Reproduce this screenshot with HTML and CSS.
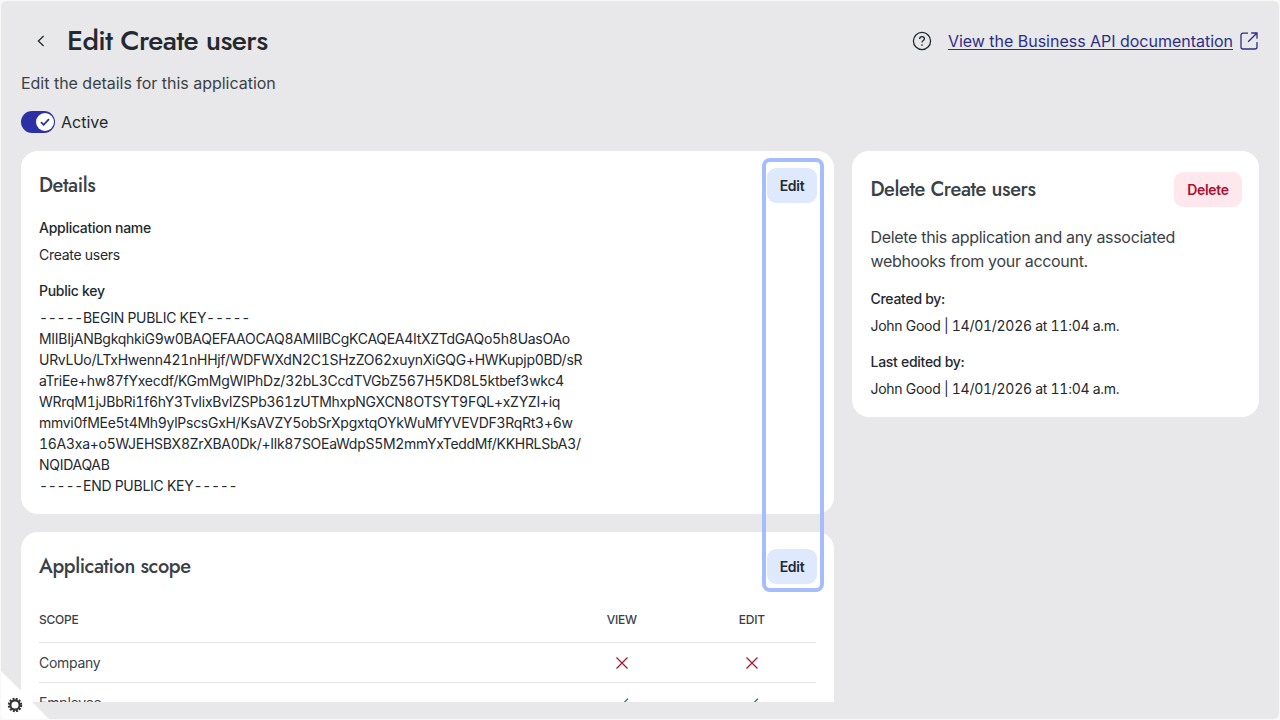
FILE: index.html
```html
<!DOCTYPE html>
<html lang="en">
<head>
  <meta charset="UTF-8" />
  <meta name="viewport" content="width=device-width, initial-scale=1.0" />
  <title>Edit Create users</title>
  <link rel="stylesheet" href="styles.css">
</head>
<body>
  <div class="page">
    <header class="header">
      <a class="back" href="#" aria-label="Back">
        <svg width="8" height="12" viewBox="0 0 8 12"><path d="M6.6 1L1.4 6l5.2 5"/></svg>
      </a>
      <h1>Edit Create users</h1>
      <div class="docs">
        <svg class="help" width="20" height="20" viewBox="0 0 20 20">
          <circle cx="10" cy="10" r="8.6"/>
          <path d="M7.6 8.1c0-1.5 1-2.5 2.4-2.5s2.4.9 2.4 2.2c0 1.7-2.4 1.8-2.4 3.7"/>
          <circle class="dot" cx="10" cy="14" r=".85"/>
        </svg>
        <a href="#">View the Business API documentation</a>
        <svg class="external" width="18" height="18" viewBox="0 0 18 18">
          <path d="M8 1.2H3a2 2 0 0 0-2 2V15a2 2 0 0 0 2 2h12a2 2 0 0 0 2-2v-5M11.200 1H17v5.800M17 1L8.200 9.800"/>
        </svg>
      </div>
    </header>

    <p class="subtitle">Edit the details for this application</p>

    <div class="status">
      <div class="toggle">
        <div class="knob"><svg width="10" height="8" viewBox="0 0 10 8"><path d="M1 4.200l2.600 2.600L9 1.200"/></svg></div>
      </div>
      <span>Active</span>
    </div>

    <main class="columns">
      <div class="left">
        <!-- DETAILS -->
        <section class="card">
          <div class="card-head">
            <h2>Details</h2>
            <button class="btn">Edit</button>
          </div>
          <dl>
            <dt>Application name</dt>
            <dd>Create users</dd>
            <dt>Public key</dt>
            <dd class="key">
              <div>-----BEGIN PUBLIC KEY-----</div>
              <div>MIIBIjANBgkqhkiG9w0BAQEFAAOCAQ8AMIIBCgKCAQEA4ItXZTdGAQo5h8UasOAo</div>
              <div>URvLUo/LTxHwenn421nHHjf/WDFWXdN2C1SHzZO62xuynXiGQG+HWKupjp0BD/sR</div>
              <div>aTriEe+hw87fYxecdf/KGmMgWIPhDz/32bL3CcdTVGbZ567H5KD8L5ktbef3wkc4</div>
              <div>WRrqM1jJBbRi1f6hY3TvIixBvIZSPb361zUTMhxpNGXCN8OTSYT9FQL+xZYZI+iq</div>
              <div>mmvi0fMEe5t4Mh9ylPscsGxH/KsAVZY5obSrXpgxtqOYkWuMfYVEVDF3RqRt3+6w</div>
              <div>16A3xa+o5WJEHSBX8ZrXBA0Dk/+Ilk87SOEaWdpS5M2mmYxTeddMf/KKHRLSbA3/</div>
              <div>NQIDAQAB</div>
              <div>-----END PUBLIC KEY-----</div>
            </dd>
          </dl>
        </section>

        <!-- SCOPE -->
        <section class="card">
          <div class="card-head">
            <h2>Application scope</h2>
            <button class="btn">Edit</button>
          </div>
          <table>
            <thead>
              <tr><th>SCOPE</th><th>VIEW</th><th>EDIT</th></tr>
            </thead>
            <tbody>
              <tr>
                <td>Company</td>
                <td><svg class="no" width="12" height="12" viewBox="0 0 12 12"><path d="M.5.5l11 11M11.500.5l-11 11"/></svg></td>
                <td><svg class="no" width="12" height="12" viewBox="0 0 12 12"><path d="M.5.5l11 11M11.500.5l-11 11"/></svg></td>
              </tr>
              <tr>
                <td>Employee</td>
                <td><svg class="yes" width="14" height="10" viewBox="0 0 14 10"><path d="M1 5.500L4.600 9 13 .7"/></svg></td>
                <td><svg class="yes" width="14" height="10" viewBox="0 0 14 10"><path d="M1 5.500L4.600 9 13 .7"/></svg></td>
              </tr>
            </tbody>
          </table>
        </section>
        <div class="highlight"></div>
      </div>

      <!-- DELETE -->
      <aside class="card side">
        <div class="card-head">
          <h2>Delete Create users</h2>
          <button class="btn danger">Delete</button>
        </div>
        <p>Delete this application and any associated webhooks from your account.</p>
        <dl>
          <dt>Created by:</dt>
          <dd>John Good | 14/01/2026 at 11:04 a.m.</dd>
          <dt>Last edited by:</dt>
          <dd>John Good | 14/01/2026 at 11:04 a.m.</dd>
        </dl>
      </aside>
    </main>

    <div class="corner">
      <svg width="48" height="48" viewBox="0 0 48 48">
        <path class="fold" d="M0 0l48 48H0z"/>
        <circle class="teeth" cx="14" cy="34" r="6"/>
        <circle class="ring" cx="14" cy="34" r="4.600"/>
      </svg>
    </div>
  </div>
</body>
</html>
```
FILE: styles.css
```css
*{margin:0;padding:0;box-sizing:border-box;}
body{
  font-family:Inter,sans-serif;
  font-size:14px;
  line-height:21px;
  color:#23292f;
  background:#f8f8f8;
}
svg{display:block;fill:none;stroke:currentColor;flex:none;}
h1,h2{font-family:Jost,Lato,sans-serif;font-weight:500;}

.page{
  position:relative;
  display:flex;
  flex-direction:column;
  height:720px;
  padding:20px 20px 17px;
  border:1px solid #f8f8f8;
  border-radius:6px;
  background:#e8e8ea;
  background-clip:padding-box;
  overflow:hidden;
}

/* ---------- HEADER ---------- */
.header{display:flex;align-items:center;height:40px;}
.back{width:40px;display:flex;justify-content:center;color:#23292f;}
.back svg{stroke-width:1.3;}
h1{font-size:28px;line-height:40px;margin-left:6px;letter-spacing:-.02em;color:#23292f;}
.docs{margin-left:auto;margin-right:1px;display:flex;align-items:center;font-size:16px;color:#2d2f86;}
.docs a{color:inherit;letter-spacing:-.02px;text-underline-offset:2px;margin:0 7px 0 16px;}
.help{color:#23292f;stroke-width:1.3;}
.help .dot{fill:currentColor;stroke:none;}
.external{stroke-width:1.3;}

.subtitle{font-size:16px;line-height:24px;letter-spacing:-.02px;margin-top:10px;color:#3b4147;}

.status{display:flex;align-items:center;gap:6px;height:22px;margin-top:16px;font-size:16px;}
.toggle{
  width:34px;height:22px;padding:2px 1px;
  display:flex;justify-content:flex-end;
  border-radius:11px;
  background:#2c2fa6;
}
.knob{
  width:18px;height:18px;border-radius:50%;
  display:flex;align-items:center;justify-content:center;
  background:#fff;color:#2c2fa6;
}
.knob svg{stroke-width:1.8;}

/* ---------- CARDS ---------- */
.columns{
  flex:1;min-height:0;
  display:grid;
  grid-template-columns:813px 407px;
  gap:18px;
  align-items:start;
  margin-top:18px;
  overflow:hidden;
}
.left{position:relative;display:flex;flex-direction:column;gap:18px;}
.card{background:#fff;border-radius:17px;padding:17px 17px 18px 18px;}
.card *{letter-spacing:-.02em;}
.card-head{display:flex;justify-content:space-between;align-items:center;}
h2{font-size:20px;line-height:30px;color:#3b4147;}
.btn{
  width:50px;height:35px;
  border:0;border-radius:9px;
  font:600 14px/21px Inter,sans-serif;
  background:#dfe9fe;color:#23292f;
}
.btn.danger{width:68px;background:#ffe8ed;color:#a8122f;}

dl{padding-top:14px;}
dt{font-weight:500;margin-bottom:6px;}
dd{font-variant-numeric:tabular-nums;}
dd + dt{margin-top:15px;}

.side{padding:21px 17px 18px 18.500px;}
.side p{font-size:16px;line-height:24px;margin-top:18px;color:#3b4147;}
.side dl{padding-top:15px;}

/* outline around both edit buttons */
.highlight{
  position:absolute;
  left:741px;top:7px;
  width:62px;height:434px;
  border:4px solid #a5bcfd;
  border-radius:8px;
}

/* ---------- TABLE ---------- */
table{width:777px;margin-top:13px;border-collapse:collapse;table-layout:fixed;}
th{
  height:45px;
  font-size:12px;font-weight:500;
  color:#3b4147;
  width:130px;
  padding-left:1.500px;
}
th:first-child{width:auto;text-align:left;padding-left:0;}
td{height:40px;padding:1px 0 0 1.500px;border-top:1px solid #e3e4e6;text-align:center;color:#3b4147;}
td:first-child{text-align:left;padding-left:0;}
td svg{margin:0 auto;stroke-width:1.2;}
.no{color:#a8122f;}
.yes{color:#128150;}

/* ---------- CORNER ---------- */
.corner{position:absolute;left:0;bottom:0;}
.fold{fill:#fff;stroke:none;}
.teeth{stroke:#333;stroke-width:2.400;stroke-dasharray:1.880 1.260;}
.ring{stroke:#333;stroke-width:2.100;}
```
